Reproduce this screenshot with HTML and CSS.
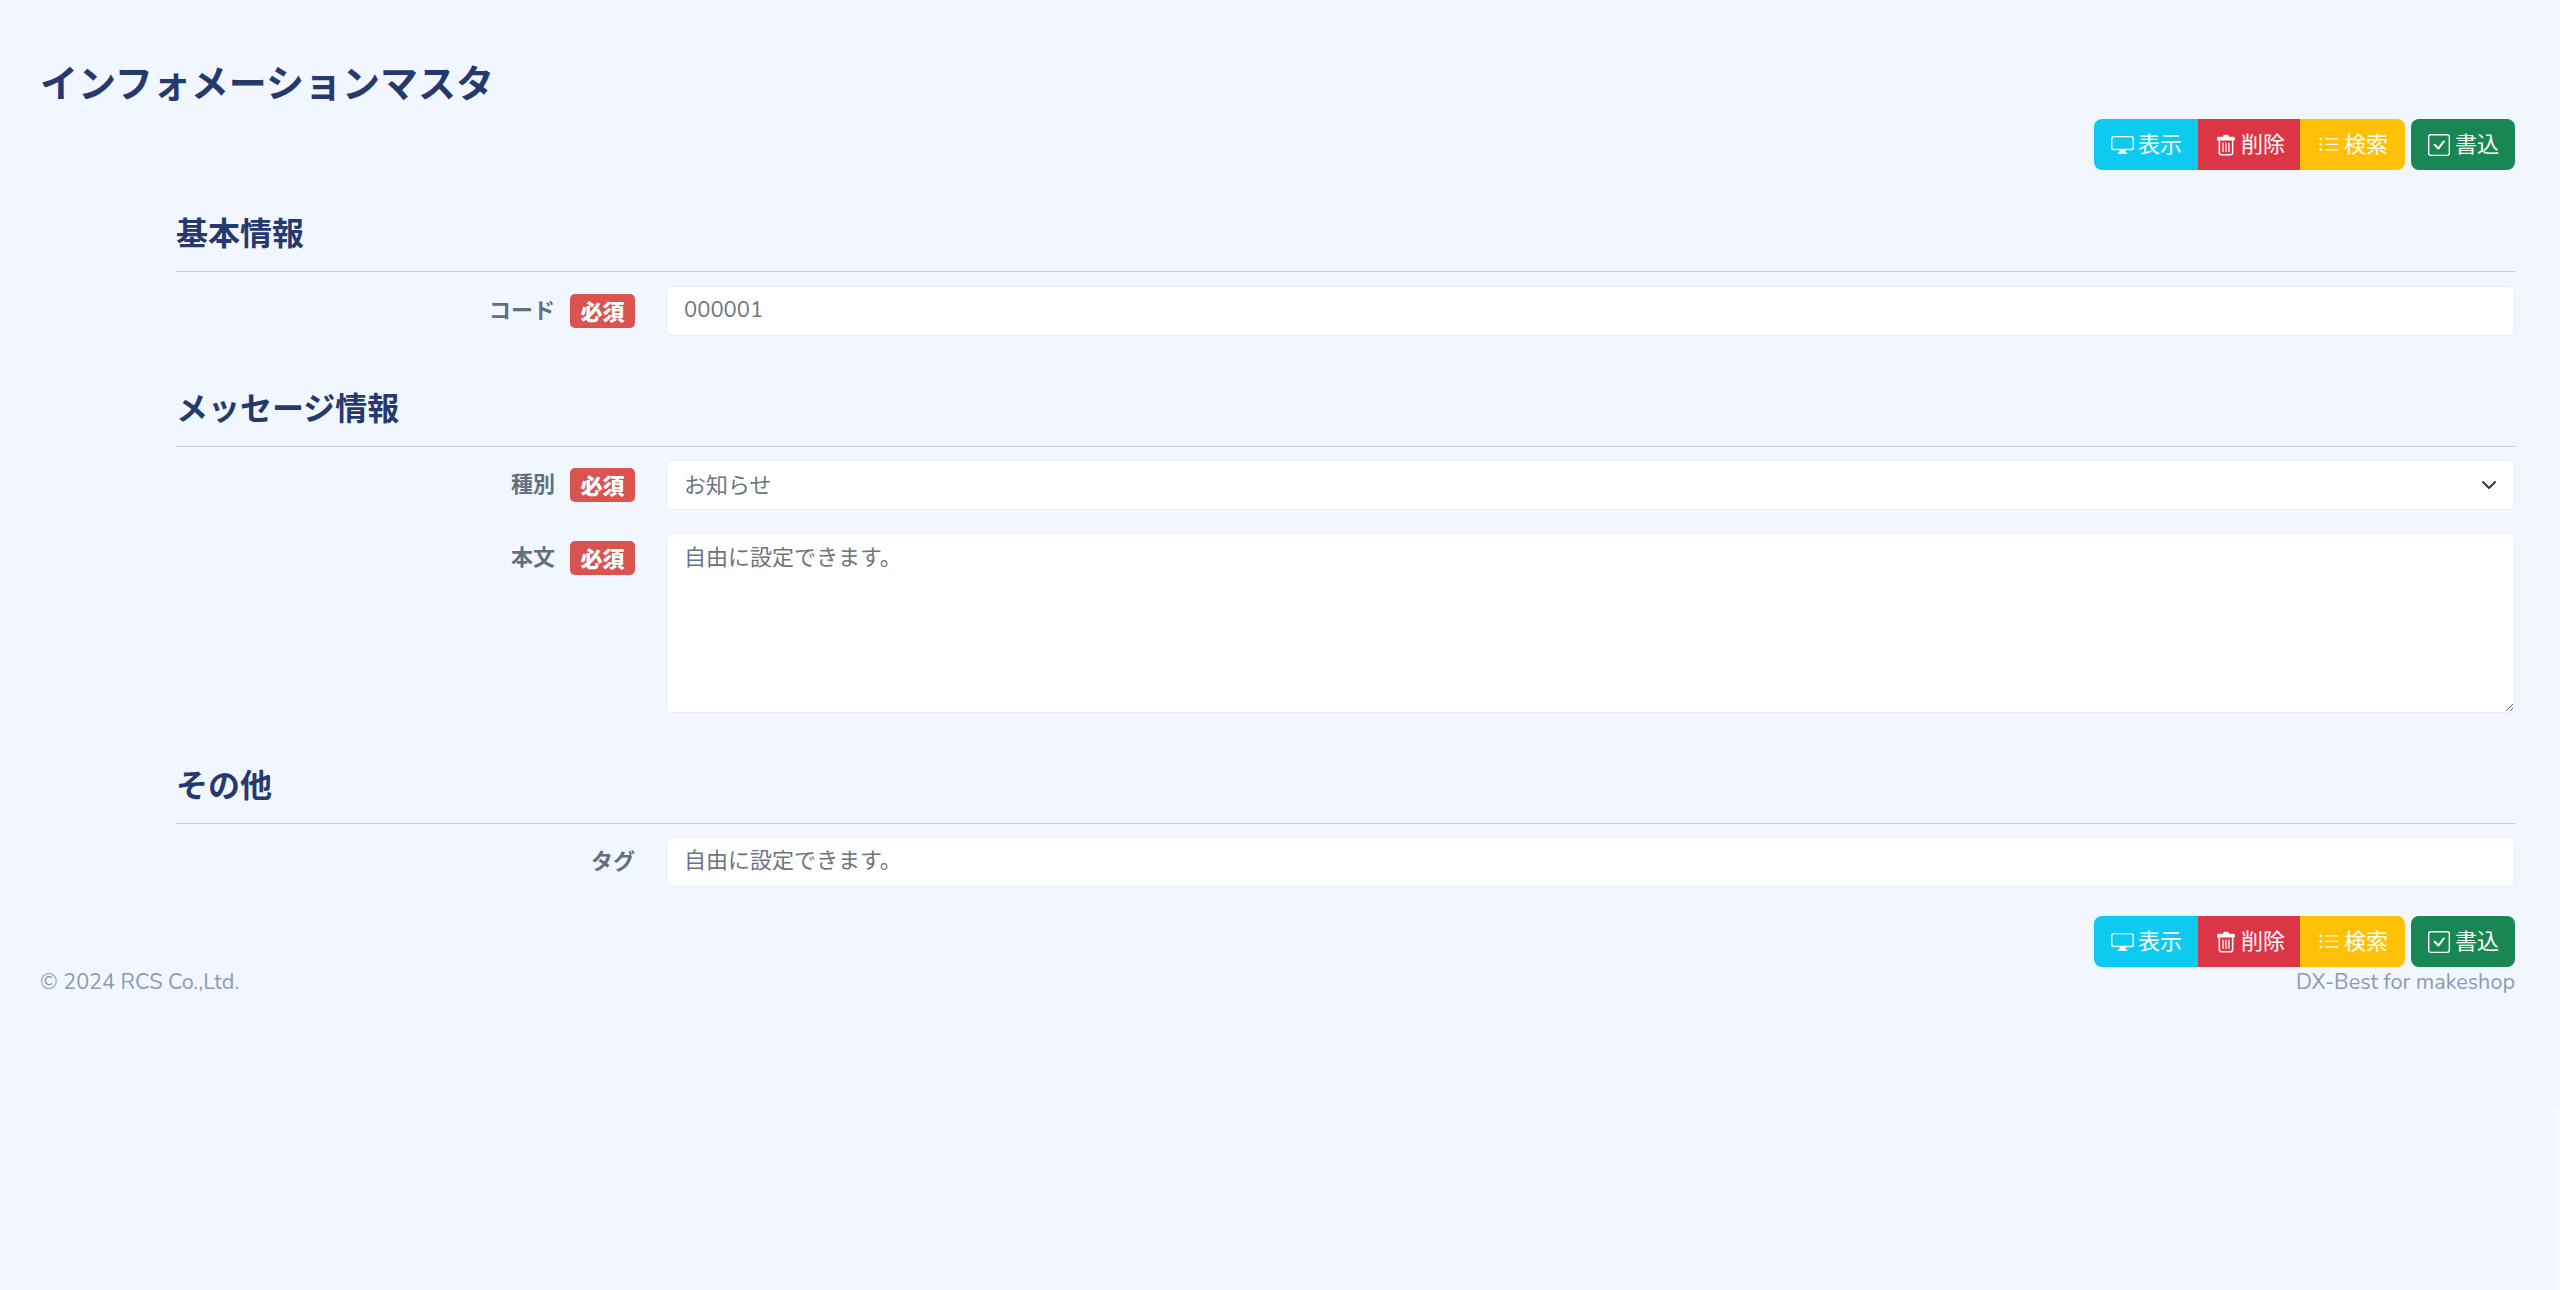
FILE: index.html
```html
<!DOCTYPE html>
<html lang="ja">
<head>
<meta charset="utf-8">
<title>インフォメーションマスタ</title>
<link rel="stylesheet" href="styles.css">
</head>
<body>
<svg class="defs" aria-hidden="true">
  <symbol id="i-display" viewBox="0 0 16 16"><path d="M0 4s0-2 2-2h12s2 0 2 2v6s0 2-2 2h-4q0 1 .25 1.5H11a.5.5 0 0 1 0 1H5a.5.5 0 0 1 0-1h.75Q6 13 6 12H2s-2 0-2-2zm1.398-.855a.76.76 0 0 0-.254.302A1.5 1.5 0 0 0 1 4.01V10c0 .325.078.502.145.602q.105.156.302.254a1.5 1.5 0 0 0 .538.143L2.01 11H14c.325 0 .502-.078.602-.145a.76.76 0 0 0 .254-.302 1.5 1.5 0 0 0 .143-.538L15 9.99V4c0-.325-.078-.502-.145-.602a.76.76 0 0 0-.302-.254A1.5 1.5 0 0 0 13.99 3H2c-.325 0-.502.078-.602.145"/></symbol>
  <symbol id="i-trash" viewBox="0 0 16 16"><path d="M6 1.5A1 1 0 0 1 7 .6h2a1 1 0 0 1 1 .9V2h3.500A1 1 0 0 1 14.500 3v1.200a.6.6 0 0 1-.6.6H2.100a.6.6 0 0 1-.6-.6V3a1 1 0 0 1 1-1H6z"/><path d="M2.600 4.500h1.100v9c0 .6.400 1 1 1h6.600c.6 0 1-.4 1-1v-9h1.100v9.100c0 1.200-.9 2-2 2H4.600c-1.100 0-2-.8-2-2z"/><path d="M5.400 6.400h.9v6.600h-.9zM7.550 6.400h.9v6.600h-.9zM9.700 6.400h.9v6.600h-.9z"/></symbol>
  <symbol id="i-list" viewBox="0 0 16 16"><path d="M5 11.500a.5.5 0 0 1 .5-.5h9a.5.5 0 0 1 0 1h-9a.5.5 0 0 1-.5-.5m0-4a.5.5 0 0 1 .5-.5h9a.5.5 0 0 1 0 1h-9a.5.5 0 0 1-.5-.5m0-4a.5.5 0 0 1 .5-.5h9a.5.5 0 0 1 0 1h-9a.5.5 0 0 1-.5-.5m-3 1a1 1 0 1 0 0-2 1 1 0 0 0 0 2m0 4a1 1 0 1 0 0-2 1 1 0 0 0 0 2m0 4a1 1 0 1 0 0-2 1 1 0 0 0 0 2"/></symbol>
  <symbol id="i-check" viewBox="0 0 16 16"><path d="M14 1a1 1 0 0 1 1 1v12a1 1 0 0 1-1 1H2a1 1 0 0 1-1-1V2a1 1 0 0 1 1-1zM2 0a2 2 0 0 0-2 2v12a2 2 0 0 0 2 2h12a2 2 0 0 0 2-2V2a2 2 0 0 0-2-2z"/><path d="M10.970 4.970a.75.75 0 0 1 1.071 1.050l-3.992 4.990a.75.75 0 0 1-1.080.020L4.324 8.384a.75.75 0 1 1 1.060-1.060l2.094 2.093 3.473-4.425z"/></symbol>
</svg>

<main class="page">
  <h1 class="page-title">インフォメーションマスタ</h1>

  <div class="toolbar toolbar-top">
    <div class="btn-group">
      <button class="btn btn-info" type="button"><svg class="icon"><use href="#i-display"/></svg><span class="btn-text">表示</span></button>
      <button class="btn btn-danger" type="button"><svg class="icon"><use href="#i-trash"/></svg><span class="btn-text">削除</span></button>
      <button class="btn btn-warning" type="button"><svg class="icon"><use href="#i-list"/></svg><span class="btn-text">検索</span></button>
    </div>
    <button class="btn btn-success" type="button"><svg class="icon"><use href="#i-check"/></svg><span class="btn-text">書込</span></button>
  </div>

  <form class="form">
    <section class="section section-basic">
      <h2 class="section-title">基本情報</h2>
      <div class="row">
        <div class="label-cell"><label class="label">コード</label><span class="badge">必須</span></div>
        <input class="control" type="text" placeholder="000001">
      </div>
    </section>

    <section class="section section-message">
      <h2 class="section-title">メッセージ情報</h2>
      <div class="row">
        <div class="label-cell"><label class="label">種別</label><span class="badge">必須</span></div>
        <div class="control control-select">お知らせ
          <svg class="chevron" viewBox="0 0 16 16"><path fill="none" stroke="#343a40" stroke-linecap="round" stroke-linejoin="round" stroke-width="2" d="M2 5l6 6 6-6"/></svg>
        </div>
      </div>
      <div class="row row-textarea">
        <div class="label-cell"><label class="label">本文</label><span class="badge">必須</span></div>
        <textarea class="control control-textarea" placeholder="自由に設定できます。"></textarea>
      </div>
    </section>

    <section class="section section-other">
      <h2 class="section-title">その他</h2>
      <div class="row">
        <div class="label-cell"><label class="label">タグ</label></div>
        <input class="control" type="text" placeholder="自由に設定できます。">
      </div>
    </section>
  </form>

  <div class="toolbar toolbar-bottom">
    <div class="btn-group">
      <button class="btn btn-info" type="button"><svg class="icon"><use href="#i-display"/></svg><span class="btn-text">表示</span></button>
      <button class="btn btn-danger" type="button"><svg class="icon"><use href="#i-trash"/></svg><span class="btn-text">削除</span></button>
      <button class="btn btn-warning" type="button"><svg class="icon"><use href="#i-list"/></svg><span class="btn-text">検索</span></button>
    </div>
    <button class="btn btn-success" type="button"><svg class="icon"><use href="#i-check"/></svg><span class="btn-text">書込</span></button>
  </div>

  <footer class="footer">
    <span>© 2024 RCS Co.,Ltd.</span>
    <span>DX-Best for makeshop</span>
  </footer>
</main>
<div class="edge-strip"></div>
</body>
</html>
```

FILE: styles.css
```css
* { box-sizing: border-box; }

html, body { margin: 0; height: 100%; }

body {
  background: #f2f7ff;
  color: #607080;
  font-family: "Nunito", "Open Sans", "Noto Sans CJK JP", sans-serif;
  font-size: 22px;
  overflow: hidden;
  position: relative;
}

.defs { display: none; }

.page { padding: 60px 45px 0 40px; }

.page-title {
  margin: 0;
  height: 48px;
  line-height: 42px;
  font-size: 38px;
  font-weight: 700;
  color: #25396f;
  font-family: "Noto Sans CJK JP", sans-serif;
}

.toolbar { display: flex; justify-content: flex-end; gap: 6px; }
.toolbar-top { margin-top: 11px; }
.toolbar-bottom { margin-top: 29px; }

.btn-group { display: flex; border-radius: 8px; overflow: hidden; }

.btn {
  display: flex;
  align-items: center;
  height: 51px;
  border: 0;
  color: #fff;
  font-family: "Noto Sans CJK JP", sans-serif;
  font-size: 22px;
  line-height: 1;
}

.btn-text { margin-bottom: 5px; }

.btn-info { background: #0dcaf0; padding: 0 16px 0 17px; }
.btn-danger { background: #dc3545; padding: 0 15px 0 17px; }
.btn-warning { background: #ffc107; padding: 0 17px 0 18px; }
.btn-success { background: #198754; border-radius: 8px; padding: 0 16px 0 17px; }

.icon { width: 22px; height: 22px; margin-right: 4px; fill: currentColor; flex: none; }
.btn-info .icon { width: 23px; height: 23px; }
.btn-success .icon { margin-right: 5px; }

.form { margin-left: 136px; }

.section { display: flex; flex-direction: column; }

.section-title {
  margin: 0;
  height: 102px;
  line-height: 1;
  display: flex;
  align-items: flex-end;
  padding-bottom: 24px;
  font-size: 32px;
  font-weight: 700;
  color: #25396f;
  font-family: "Noto Sans CJK JP", sans-serif;
  border-bottom: 1px solid #c8cfdc;
}

.section-message .section-title { height: 111px; }
.section-other .section-title { height: 111px; }

.row { display: flex; margin-top: 13px; }
.section-basic .row { margin-top: 14px; }
.section-message .row-textarea { margin-top: 23px; }

.label-cell {
  width: 490px;
  flex: none;
  padding-right: 31px;
  display: flex;
  justify-content: flex-end;
  align-items: center;
  height: 50px;
  gap: 15px;
}

.label {
  font-family: "Noto Sans CJK JP", sans-serif;
  font-size: 22px;
  font-weight: 700;
  color: #607080;
  padding-bottom: 7px;
}

.badge {
  width: 65px;
  height: 34px;
  display: flex;
  align-items: center;
  justify-content: center;
  background: #d9534f;
  color: #fff;
  border-radius: 5px;
  font-family: "Noto Sans CJK JP", sans-serif;
  font-size: 22px;
  font-weight: 900;
  padding-bottom: 3px;
}

.control {
  flex: 1;
  min-width: 0;
  height: 50px;
  padding: 0 17px 3px;
  background: #fff;
  border: 1px solid #e8eef6;
  border-radius: 6px;
  color: #607080;
  font-family: "Nunito", "Open Sans", "Noto Sans CJK JP", sans-serif;
  font-size: 22px;
  outline: none;
}

.control::placeholder { color: #6c757d; opacity: 1; }

.control-select {
  display: flex;
  align-items: center;
  justify-content: space-between;
  padding-bottom: 5px;
  color: #6c757d;
  font-family: "Noto Sans CJK JP", sans-serif;
}

.chevron { width: 16px; height: 16px; margin: 5px 0 0 0; }

.control-textarea {
  height: 180px;
  padding: 7px 17px;
  line-height: 1.3;
  font-family: "Noto Sans CJK JP", sans-serif;
  resize: vertical;
}

.footer {
  display: flex;
  justify-content: space-between;
  margin-top: 0;
  font-family: "Nunito", "Open Sans", sans-serif;
  font-size: 21.6px;
  line-height: 30px;
  color: #8e9ab5;
}

.edge-strip {
  position: absolute;
  right: 0;
  bottom: 0;
  width: 5px;
  height: 182px;
  background: #f9faff;
}
```
